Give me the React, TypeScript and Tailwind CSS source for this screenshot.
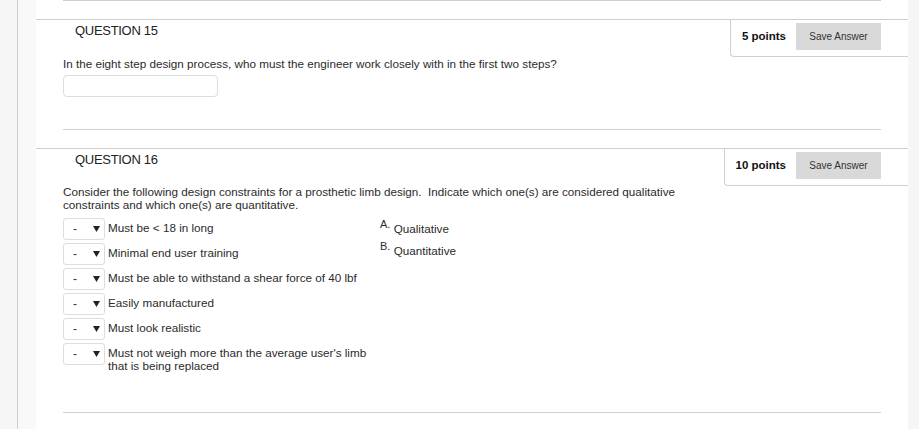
import React from 'react';

const constraints = [
  'Must be < 18 in long',
  'Minimal end user training',
  'Must be able to withstand a shear force of 40 lbf',
  'Easily manufactured',
  'Must look realistic',
  "Must not weigh more than the average user's limb that is being replaced",
];

const choices = [
  { key: 'A.', label: 'Qualitative' },
  { key: 'B.', label: 'Quantitative' },
];

function PointsBox({ points }: { points: number }) {
  return (
    <div className="flex items-start gap-[10px] border-l border-b border-[#cfcfcf] rounded-bl-[4px] pl-[11px] pr-[27px] pt-[3px] pb-[6px]">
      <span className="font-bold text-[11.5px] leading-[27px] text-[#111]">{points} points</span>
      <button className="w-[85px] h-[27px] bg-[#d9d9d9] text-[10px] text-[#333]">Save Answer</button>
    </div>
  );
}

function QuestionHeader({ num, points }: { num: number; points: number }) {
  return (
    <div className="flex justify-between border-t border-[#cfcfcf]">
      <h2 className="pl-[39px] pt-[3px] text-[13px] leading-[16px] tracking-[-0.3px] text-[#222]">
        QUESTION {num}
      </h2>
      <PointsBox points={points} />
    </div>
  );
}

function DashSelect() {
  return (
    <div className="flex items-center justify-between w-[42px] h-[22px] shrink-0 border border-[#ddd] rounded-[3px] pl-[9px] pr-[4px] text-[12px] text-[#333]">
      <span>-</span>
      <svg width="7" height="6" viewBox="0 0 7 6">
        <path d="M0 0h7L3.5 6z" fill="#222" />
      </svg>
    </div>
  );
}

export default function App() {
  return (
    <div className="flex h-[429px] w-full overflow-hidden bg-white font-['Liberation_Sans',Arial,sans-serif] text-[#2b2b2b]">
      <div className="w-[18px] shrink-0 bg-[#f6f6f6] border-r border-[#cfcfcf]" />
      <div className="w-[18px] shrink-0 bg-[#f9f9f9]" />

      <main className="flex-1 flex flex-col">
        <div className="mx-[27px] border-t border-[#cfcfcf]" />

        {/* Question 15 */}
        <section className="mt-[18px]">
          <QuestionHeader num={15} points={5} />
          <div className="px-[27px]">
            <p className="text-[11.7px] leading-[13px]">
              In the eight step design process, who must the engineer work closely with in the first two steps?
            </p>
            <input
              type="text"
              className="mt-[5px] block w-[155px] h-[22px] border border-[#ddd] rounded-[4px] outline-none"
            />
            <div className="mt-[32px] border-t border-[#cfcfcf]" />
          </div>
        </section>

        {/* Question 16 */}
        <section className="mt-[18px]">
          <QuestionHeader num={16} points={10} />
          <div className="px-[27px]">
            <p className="w-[650px] text-[11.7px] leading-[12.5px]">
              Consider the following design constraints for a prosthetic limb design.&nbsp; Indicate which one(s) are considered qualitative constraints and which one(s) are quantitative.
            </p>
            <div className="mt-[7px] flex">
              <div className="flex flex-col gap-[3px]">
                {constraints.map((c) => (
                  <div key={c} className="flex items-start gap-[3px]">
                    <DashSelect />
                    <span className="w-[272px] pt-[4px] text-[11.7px] leading-[12.5px]">{c}</span>
                  </div>
                ))}
              </div>
              <div className="flex flex-col">
                {choices.map((ch) => (
                  <div key={ch.key} className="text-[11.7px] leading-[22px]">
                    <span className="align-super text-[11px] leading-none">{ch.key}</span> {ch.label}
                  </div>
                ))}
              </div>
            </div>
            <div className="mt-[40px] border-t border-[#cfcfcf]" />
          </div>
        </section>
      </main>

      <div className="w-[11px] shrink-0 bg-[#f6f6f6]" />
    </div>
  );
}
